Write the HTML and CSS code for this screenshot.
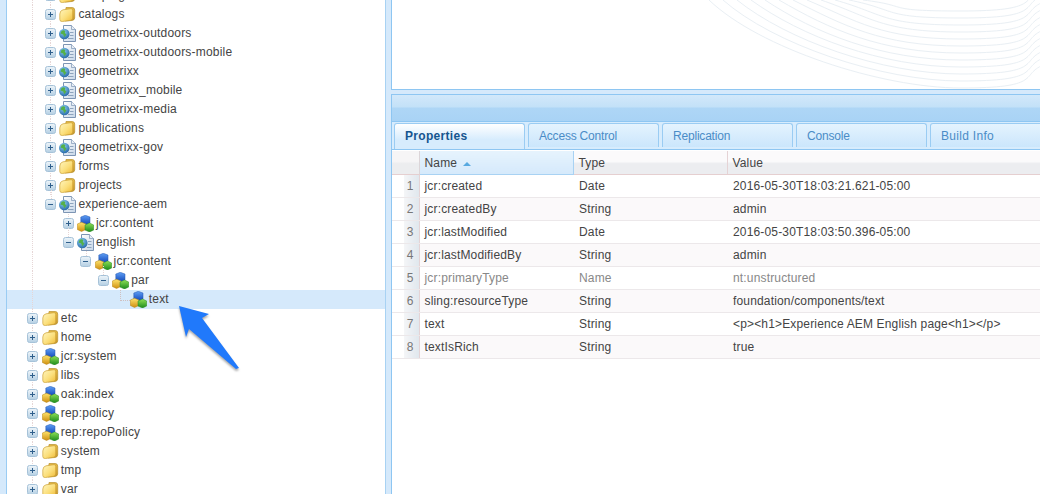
FILE: index.html
```html
<!DOCTYPE html>
<html lang="en">
<head>
<meta charset="utf-8">
<title>CRXDE</title>
<link rel="stylesheet" href="styles.css">
</head>
<body>
<svg class="defs" aria-hidden="true">
  <defs>
    <linearGradient id="fy" x1="0" y1="0" x2="1" y2="1"><stop offset="0" stop-color="#fff6c0"/><stop offset=".55" stop-color="#fbdf7c"/><stop offset="1" stop-color="#efba36"/></linearGradient>
    <linearGradient id="fb" x1="0" y1="0" x2="0" y2="1"><stop offset="0" stop-color="#e8bc45"/><stop offset="1" stop-color="#c4952a"/></linearGradient>
    <linearGradient id="pg" x1="0" y1="0" x2="1" y2="1"><stop offset="0" stop-color="#ffffff"/><stop offset="1" stop-color="#c6d6e8"/></linearGradient>
    <radialGradient id="gl" cx=".4" cy=".3" r=".8"><stop offset="0" stop-color="#8fd0f5"/><stop offset="1" stop-color="#1c5f9f"/></radialGradient>
    <linearGradient id="cb" x1="0" y1="0" x2="0" y2="1"><stop offset="0" stop-color="#5f9ff5"/><stop offset="1" stop-color="#0f45b8"/></linearGradient>
    <linearGradient id="cy" x1="0" y1="0" x2="0" y2="1"><stop offset="0" stop-color="#ffe56e"/><stop offset="1" stop-color="#cf8f10"/></linearGradient>
    <linearGradient id="cg" x1="0" y1="0" x2="0" y2="1"><stop offset="0" stop-color="#8fe055"/><stop offset="1" stop-color="#1b8a1c"/></linearGradient>
    <linearGradient id="ex" x1="0" y1="0" x2="0" y2="1"><stop offset="0" stop-color="#eef5fa"/><stop offset="1" stop-color="#b4cfe3"/></linearGradient>
    <symbol id="folder" viewBox="0 0 17 17">
      <path d="M7 1.500H13Q15.700 1.500 15.700 4V12Q15.700 14 13 14.500L6 15Z" fill="url(#fb)" stroke="#b8902e" stroke-width=".7"/>
      <path d="M.8 8Q1 4.500 4 3.800L12 2.700Q13.700 2.500 13.700 4.200V12Q13.700 14 11.500 14.300L3.500 15.500Q.8 15.800 .8 13.500Z" fill="url(#fy)" stroke="#cda238" stroke-width=".7"/>
    </symbol>
    <symbol id="page" viewBox="0 0 17 17">
      <path d="M4.500 .5H12.500L16.500 4.500V16.500H4.500Z" fill="url(#pg)" stroke="#7d95b4"/>
      <path d="M12.500 .5V4.500H16.500" fill="#e8eef5" stroke="#7d95b4" stroke-width=".7"/>
      <path d="M11 7.500H14.500M11 10.500H14.500M9 13.500H14.500" stroke="#8ea4bd"/>
      <circle cx="5.300" cy="9" r="5.300" fill="url(#gl)"/>
      <path d="M2.500 6Q4.500 4.500 6.300 6L5.800 8L7.500 9.500L5.300 12.300L4.200 9.500L1.500 8.500Z" fill="#54b04a"/>
    </symbol>
    <symbol id="node" viewBox="0 0 17 17">
      <path d="M3.800 2L8.300 .3L13 2V8L8.300 10L3.800 8Z" fill="url(#cb)" stroke="#2257b0" stroke-width=".5"/>
      <path d="M.3 9L4.500 7.200L9 9V14.500L4.500 16.500L.3 14.500Z" fill="url(#cy)" stroke="#b58518" stroke-width=".5"/>
      <path d="M8 10L12.500 8L16.700 10V15L12.500 17L8 15Z" fill="url(#cg)" stroke="#2a8a22" stroke-width=".5"/>
    </symbol>
    <symbol id="plus" viewBox="0 0 11 11">
      <rect x=".5" y=".5" width="10" height="10" rx="2" fill="url(#ex)" stroke="#a6c2d8"/>
      <path d="M3 5.500H8M5.500 3V8" stroke="#2f5f8c"/>
    </symbol>
    <symbol id="minus" viewBox="0 0 11 11">
      <rect x=".5" y=".5" width="10" height="10" rx="2" fill="url(#ex)" stroke="#a6c2d8"/>
      <path d="M3 5.500H8" stroke="#2f5f8c"/>
    </symbol>
  </defs>
</svg>

<div class="app">
  <aside class="edge"></aside>

  <nav class="tree">
    <div class="row first"><i class="c g"></i><i class="c g"><svg class="ex"><use href="#plus"/></svg></i><svg class="ic"><use href="#folder"/></svg><span>campaigns</span></div>
    <div class="row"><i class="c g"></i><i class="c g"><svg class="ex"><use href="#plus"/></svg></i><svg class="ic"><use href="#folder"/></svg><span>catalogs</span></div>
    <div class="row"><i class="c g"></i><i class="c g"><svg class="ex"><use href="#plus"/></svg></i><svg class="ic"><use href="#page"/></svg><span>geometrixx-outdoors</span></div>
    <div class="row"><i class="c g"></i><i class="c g"><svg class="ex"><use href="#plus"/></svg></i><svg class="ic"><use href="#page"/></svg><span>geometrixx-outdoors-mobile</span></div>
    <div class="row"><i class="c g"></i><i class="c g"><svg class="ex"><use href="#plus"/></svg></i><svg class="ic"><use href="#page"/></svg><span>geometrixx</span></div>
    <div class="row"><i class="c g"></i><i class="c g"><svg class="ex"><use href="#plus"/></svg></i><svg class="ic"><use href="#page"/></svg><span>geometrixx_mobile</span></div>
    <div class="row"><i class="c g"></i><i class="c g"><svg class="ex"><use href="#plus"/></svg></i><svg class="ic"><use href="#page"/></svg><span>geometrixx-media</span></div>
    <div class="row"><i class="c g"></i><i class="c g"><svg class="ex"><use href="#plus"/></svg></i><svg class="ic"><use href="#folder"/></svg><span>publications</span></div>
    <div class="row"><i class="c g"></i><i class="c g"><svg class="ex"><use href="#plus"/></svg></i><svg class="ic"><use href="#page"/></svg><span>geometrixx-gov</span></div>
    <div class="row"><i class="c g"></i><i class="c g"><svg class="ex"><use href="#plus"/></svg></i><svg class="ic"><use href="#folder"/></svg><span>forms</span></div>
    <div class="row"><i class="c g"></i><i class="c g"><svg class="ex"><use href="#plus"/></svg></i><svg class="ic"><use href="#folder"/></svg><span>projects</span></div>
    <div class="row"><i class="c g"></i><i class="c gh"><svg class="ex"><use href="#minus"/></svg></i><svg class="ic"><use href="#page"/></svg><span>experience-aem</span></div>
    <div class="row"><i class="c g"></i><i class="c"></i><i class="c g"><svg class="ex"><use href="#plus"/></svg></i><svg class="ic"><use href="#node"/></svg><span>jcr:content</span></div>
    <div class="row"><i class="c g"></i><i class="c"></i><i class="c gh"><svg class="ex"><use href="#minus"/></svg></i><svg class="ic"><use href="#page"/></svg><span>english</span></div>
    <div class="row"><i class="c g"></i><i class="c"></i><i class="c"></i><i class="c gh"><svg class="ex"><use href="#minus"/></svg></i><svg class="ic"><use href="#node"/></svg><span>jcr:content</span></div>
    <div class="row"><i class="c g"></i><i class="c"></i><i class="c"></i><i class="c"></i><i class="c gh"><svg class="ex"><use href="#minus"/></svg></i><svg class="ic"><use href="#node"/></svg><span>par</span></div>
    <div class="row sel"><i class="c g"></i><i class="c"></i><i class="c"></i><i class="c"></i><i class="c"></i><i class="c elbow"></i><svg class="ic"><use href="#node"/></svg><span>text</span></div>
    <div class="row"><i class="c g"><svg class="ex"><use href="#plus"/></svg></i><svg class="ic"><use href="#folder"/></svg><span>etc</span></div>
    <div class="row"><i class="c g"><svg class="ex"><use href="#plus"/></svg></i><svg class="ic"><use href="#folder"/></svg><span>home</span></div>
    <div class="row"><i class="c g"><svg class="ex"><use href="#plus"/></svg></i><svg class="ic"><use href="#node"/></svg><span>jcr:system</span></div>
    <div class="row"><i class="c g"><svg class="ex"><use href="#plus"/></svg></i><svg class="ic"><use href="#folder"/></svg><span>libs</span></div>
    <div class="row"><i class="c g"><svg class="ex"><use href="#plus"/></svg></i><svg class="ic"><use href="#node"/></svg><span>oak:index</span></div>
    <div class="row"><i class="c g"><svg class="ex"><use href="#plus"/></svg></i><svg class="ic"><use href="#node"/></svg><span>rep:policy</span></div>
    <div class="row"><i class="c g"><svg class="ex"><use href="#plus"/></svg></i><svg class="ic"><use href="#node"/></svg><span>rep:repoPolicy</span></div>
    <div class="row"><i class="c g"><svg class="ex"><use href="#plus"/></svg></i><svg class="ic"><use href="#folder"/></svg><span>system</span></div>
    <div class="row"><i class="c g"><svg class="ex"><use href="#plus"/></svg></i><svg class="ic"><use href="#folder"/></svg><span>tmp</span></div>
    <div class="row"><i class="c g"><svg class="ex"><use href="#plus"/></svg></i><svg class="ic"><use href="#folder"/></svg><span>var</span></div>
  </nav>

  <main class="main">
    <section class="welcome">
      <svg class="swirl" viewBox="0 0 649 89" aria-hidden="true">
        <g fill="none" stroke="#e9eff4">
          <path d="M317 0C367 48 489 88 569 88S629 76 649 66"/>
          <path d="M331 0C381 44 489 81 569 81S629 69 649 59"/>
          <path d="M345 0C395 40 489 74 569 74S629 62 649 52"/>
          <path d="M359 0C409 36 489 67 569 67S629 55 649 45"/>
          <path d="M373 0C423 33 489 60 569 60S629 48 649 38"/>
          <path d="M387 0C437 29 489 53 569 53S629 41 649 31"/>
          <path d="M401 0C451 25 489 46 569 46S629 34 649 24"/>
          <path d="M415 0C465 21 489 39 569 39S629 27 649 17"/>
          <path d="M429 0C479 17 489 32 569 32S629 20 649 10"/>
          <path d="M443 0C493 14 489 25 569 25S629 13 649 3"/>
          <path d="M457 0C507 10 489 18 569 18S629 6 649 -4"/>
          <path d="M471 0C521 6 489 11 569 11S629 -1 649 -11"/>
        </g>
      </svg>
    </section>

    <section class="panel">
      <div class="toolbar"></div>
      <div class="tabs">
        <div class="tab active">Properties</div>
        <div class="tab">Access Control</div>
        <div class="tab">Replication</div>
        <div class="tab">Console</div>
        <div class="tab wide">Build Info</div>
      </div>
      <table class="grid">
        <colgroup><col class="w-num"><col class="w-name"><col class="w-type"><col></colgroup>
        <thead>
          <tr><th class="num"></th><th class="sorted">Name <b class="sort"></b></th><th>Type</th><th class="last">Value</th></tr>
        </thead>
        <tbody>
          <tr><td class="num">1</td><td>jcr:created</td><td>Date</td><td>2016-05-30T18:03:21.621-05:00</td></tr>
          <tr><td class="num">2</td><td>jcr:createdBy</td><td>String</td><td>admin</td></tr>
          <tr><td class="num">3</td><td>jcr:lastModified</td><td>Date</td><td>2016-05-30T18:03:50.396-05:00</td></tr>
          <tr><td class="num">4</td><td>jcr:lastModifiedBy</td><td>String</td><td>admin</td></tr>
          <tr class="prot"><td class="num">5</td><td>jcr:primaryType</td><td>Name</td><td>nt:unstructured</td></tr>
          <tr><td class="num">6</td><td>sling:resourceType</td><td>String</td><td>foundation/components/text</td></tr>
          <tr><td class="num">7</td><td>text</td><td>String</td><td>&lt;p&gt;&lt;h1&gt;Experience AEM English page&lt;h1&gt;&lt;/p&gt;</td></tr>
          <tr><td class="num">8</td><td>textIsRich</td><td>String</td><td>true</td></tr>
        </tbody>
      </table>
    </section>
  </main>
</div>

<svg class="arrow" viewBox="0 0 70 75" aria-hidden="true">
  <path d="M4 1L34 9L27 13L64 63L61 64L14 24L11 32Z" fill="#2079fb"/>
</svg>
</body>
</html>
```
FILE: styles.css
```css
* { box-sizing: border-box; }
html, body { margin: 0; height: 100%; overflow: hidden; }
body {
  font: 12px/19px "Liberation Sans", Arial, sans-serif;
  color: #444;
  background: #d5e9fb;
}
.defs { position: absolute; width: 0; height: 0; }

.app { display: grid; grid-template-columns: 6px 380px 1fr; height: 494px; overflow: hidden; }
.edge { background: #d5e9fb; }

/* tree */
.tree {
  background: #fff;
  border-left: 1px solid #9accf3;
  border-right: 1px solid #a8d2f3;
  overflow: hidden;
}
.row {
  display: flex;
  align-items: center;
  height: 19px;
  padding-left: 17.2px;
  white-space: nowrap;
  letter-spacing: .2px;
}
.row.first { margin-top: -14px; }
.row.sel { background: #d5e9fb; }
.c {
  flex: none;
  width: 17.6px;
  height: 19px;
  display: flex;
  align-items: center;
  justify-content: center;
  position: relative;
}
.g {
  background-image: linear-gradient(#e6d6d6 50%, transparent 50%);
  background-position: center top;
  background-size: 1px 2px;
  background-repeat: repeat-y;
}
.gh::before {
  content: "";
  position: absolute;
  left: 50%;
  top: -5px;
  height: 10px;
  width: 1px;
  background-image: linear-gradient(#e6d6d6 50%, transparent 50%);
  background-size: 1px 2px;
}
.elbow::before {
  content: "";
  position: absolute;
  left: 8px;
  top: 0;
  width: 9px;
  height: 10px;
  border-left: 1px dotted #cfc0c0;
  border-bottom: 1px dotted #cfc0c0;
}
.ex { width: 11px; height: 11px; display: block; position: relative; }
.ic { flex: none; width: 17px; height: 17px; margin: 0 2px 0 0; }

/* main */
.main { display: flex; flex-direction: column; padding-left: 5px; min-width: 0; }
.welcome {
  height: 90px;
  flex: none;
  background: #fff;
  border-left: 1px solid #8ec6f2;
  border-bottom: 1px solid #8ec6f2;
  position: relative;
  overflow: hidden;
}
.swirl { position: absolute; left: 0; top: 0; width: 649px; height: 89px; }

.panel {
  margin-top: 4px;
  flex: 1;
  background: #fff;
  border-left: 1px solid #8ec6f2;
  border-top: 1px solid #8ec6f2;
  min-height: 0;
}
.toolbar {
  height: 27px;
  background: linear-gradient(#d2e8fa 0, #c3e1f8 12px, #aed6f6 13px, #a9d3f5 100%);
  border-bottom: 1px solid #8ec6f2;
}
.tabs {
  display: flex;
  gap: 3px;
  height: 28px;
  padding: 1px 0 0 2px;
  background: #d7ecfd;
  border-bottom: 1px solid #8ec6f2;
  overflow: hidden;
}
.tab {
  flex: none;
  width: 131px;
  height: 24px;
  padding-left: 10px;
  line-height: 25px;
  color: #4a8cc7;
  letter-spacing: -.2px;
  background: linear-gradient(#e4f3fe, #cbe6fc);
  border: 1px solid #9accf3;
  border-bottom: 0;
  border-radius: 3px 3px 0 0;
}
.tab.wide { letter-spacing: .3px; }
.tab.active {
  height: 27px;
  color: #15558f;
  font-weight: bold;
  letter-spacing: .3px;
  background: linear-gradient(#fff, #d7ecfd 60%);
}

/* grid */
.grid {
  width: 100%;
  table-layout: fixed;
  border-collapse: collapse;
  margin-top: 1px;
  color: #444;
  letter-spacing: .16px;
}
.w-num { width: 27px; }
.w-name { width: 154px; }
.w-type { width: 154px; }
.grid th {
  height: 23px;
  padding: 2px 0 0 5px;
  font-weight: normal;
  text-align: left;
  background: linear-gradient(#fbfafb 45%, #ecedf0 55%);
  border-right: 1px solid #e5d3d5;
  border-bottom: 1px solid #e5cfd0;
}
.grid th.num { background: linear-gradient(#f6f5f6 45%, #ecedef 55%); border-right: 1px solid #dcd5d8; }
.grid th.sorted {
  background: linear-gradient(#e6f3fd, #d5e9fb);
  border-right: 1px solid #a8d2f3;
  border-bottom: 1px solid #a8d2f3;
}
.grid th.last { border-right: 0; }
.sort {
  display: inline-block;
  margin-left: 2px;
  vertical-align: 1px;
  border: 4px solid transparent;
  border-top: 0;
  border-bottom: 4px solid #58a9e0;
}
.grid td {
  height: 23px;
  padding: 2px 0 0 6px;
  border-bottom: 1px solid #ece8ea;
  white-space: nowrap;
  overflow: hidden;
}
.grid td:nth-child(2) { padding-left: 5px; }
.grid tbody tr:nth-child(even) td { background: #fbf9fa; }
.grid td.num, .grid tbody tr:nth-child(even) td.num {
  padding: 2px 5px 0 0;
  text-align: right;
  color: #777;
  background: linear-gradient(90deg, #fff 12px, #f4f5f7 12px, #e1e8ee 26px);
  border-right: 1px solid #e5d3d5;
}
.prot td { color: #888; }

.arrow {
  position: absolute;
  left: 175px;
  top: 305px;
  width: 70px;
  height: 75px;
  filter: drop-shadow(0 2px 1px rgba(0, 0, 0, .35));
}
```
